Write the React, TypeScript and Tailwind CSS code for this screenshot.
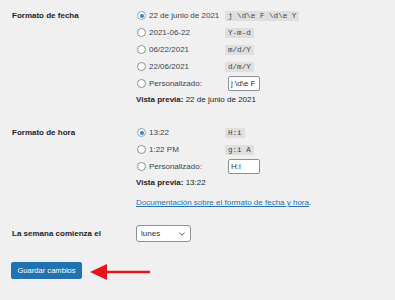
import React from "react";

const font = { fontFamily: '"Liberation Sans", Arial, sans-serif' };
const mono = { fontFamily: '"Liberation Mono", "DejaVu Sans Mono", monospace' };

function Radio({ checked }: { checked?: boolean }) {
  return (
    <span
      className={
        "flex h-[9px] w-[9px] shrink-0 items-center justify-center rounded-full border bg-white " +
        (checked ? "border-[#7fa9d3]" : "border-[#8c8f94]")
      }
    >
      {checked && <span className="h-[4px] w-[4px] rounded-full bg-[#3582c4]" />}
    </span>
  );
}

function Code({ children }: { children: React.ReactNode }) {
  return (
    <code
      className="bg-[#dfdfe0] px-[3px] py-[1px] text-[7.6px] leading-[8px] text-[#3c434a] whitespace-pre"
      style={mono}
    >
      {children}
    </code>
  );
}

function Row({
  checked,
  label,
  code,
  input,
}: {
  checked?: boolean;
  label: string;
  code?: string;
  input?: string;
}) {
  return (
    <div className="flex h-[17px] items-center">
      <div className="ml-[1px] flex w-[88px] items-center gap-[3px]">
        <Radio checked={checked} />
        <span className="text-[8px] leading-[10px] text-[#3c434a]">{label}</span>
      </div>
      {code && <Code>{code}</Code>}
      {input && (
        <input
          readOnly
          value={input}
          className="ml-[3px] h-[15px] w-[32px] rounded-[2px] border border-[#8c8f94] bg-white px-[2px] text-[8px] text-[#2c3338] outline-none"
          style={font}
        />
      )}
    </div>
  );
}

export default function App() {
  return (
    <div className="relative h-[300px] w-[395px] overflow-hidden bg-[#f0f0f1] pl-[12px] pt-[7px]" style={font}>
      {/* Date format */}
      <div className="flex">
        <div className="flex h-[17px] w-[124px] items-center text-[8px] font-bold text-[#1d2327]">
          Formato de fecha
        </div>
        <div className="flex flex-col">
          <Row checked label="22 de junio de 2021" code="j \d\e F \d\e Y" />
          <Row label="2021-06-22" code="Y-m-d" />
          <Row label="06/22/2021" code="m/d/Y" />
          <Row label="22/06/2021" code="d/m/Y" />
          <Row label="Personalizado:" input="j \d\e F \d\e Y" />
          <div className="mt-[2px] text-[8px] leading-[12px] text-[#1d2327]">
            <span className="font-bold">Vista previa:</span> 22 de junio de 2021
          </div>
        </div>
      </div>

      {/* Time format */}
      <div className="mt-[18px] flex">
        <div className="flex h-[17px] w-[124px] items-center text-[8px] font-bold text-[#1d2327]">
          Formato de hora
        </div>
        <div className="flex flex-col">
          <Row checked label="13:22" code="H:i" />
          <Row label="1:22 PM" code="g:i A" />
          <Row label="Personalizado:" input="H:i" />
          <div className="mt-[2px] text-[8px] leading-[12px] text-[#1d2327]">
            <span className="font-bold">Vista previa:</span> 13:22
          </div>
          <div className="mt-[8px] text-[8px] leading-[12px] text-[#3c434a]">
            <span className="text-[#2271b1] underline">Documentación sobre el formato de fecha y hora</span>.
          </div>
        </div>
      </div>

      {/* Week start */}
      <div className="mt-[16px] flex items-center">
        <div className="w-[124px] text-[8px] font-bold text-[#1d2327]">La semana comienza el</div>
        <div className="flex h-[17px] w-[55px] items-center justify-between rounded-[3px] border border-[#8c8f94] bg-white pl-[4px] pr-[5px] text-[8px] text-[#2c3338]">
          <span>lunes</span>
          <svg width="6" height="4" viewBox="0 0 6 4">
            <path d="M0.5 0.8 L3 3.2 L5.5 0.8" fill="none" stroke="#50575e" strokeWidth="1" />
          </svg>
        </div>
      </div>

      {/* Save button */}
      <div className="mt-[20px] flex">
        <button className="flex h-[17px] w-[71px] -ml-[1px] items-center justify-center rounded-[2px] border border-[#2271b1] bg-[#2271b1] text-[7.6px] text-white">
          Guardar cambios
        </button>
      </div>

      {/* Red annotation arrow */}
      <svg className="absolute left-[88px] top-[262px]" width="64" height="20" viewBox="0 0 64 20">
        <line x1="17" y1="10" x2="62" y2="10" stroke="#e3141b" strokeWidth="2.5" />
        <polygon points="2,10 19,2 19,18" fill="#e3141b" />
      </svg>
    </div>
  );
}
